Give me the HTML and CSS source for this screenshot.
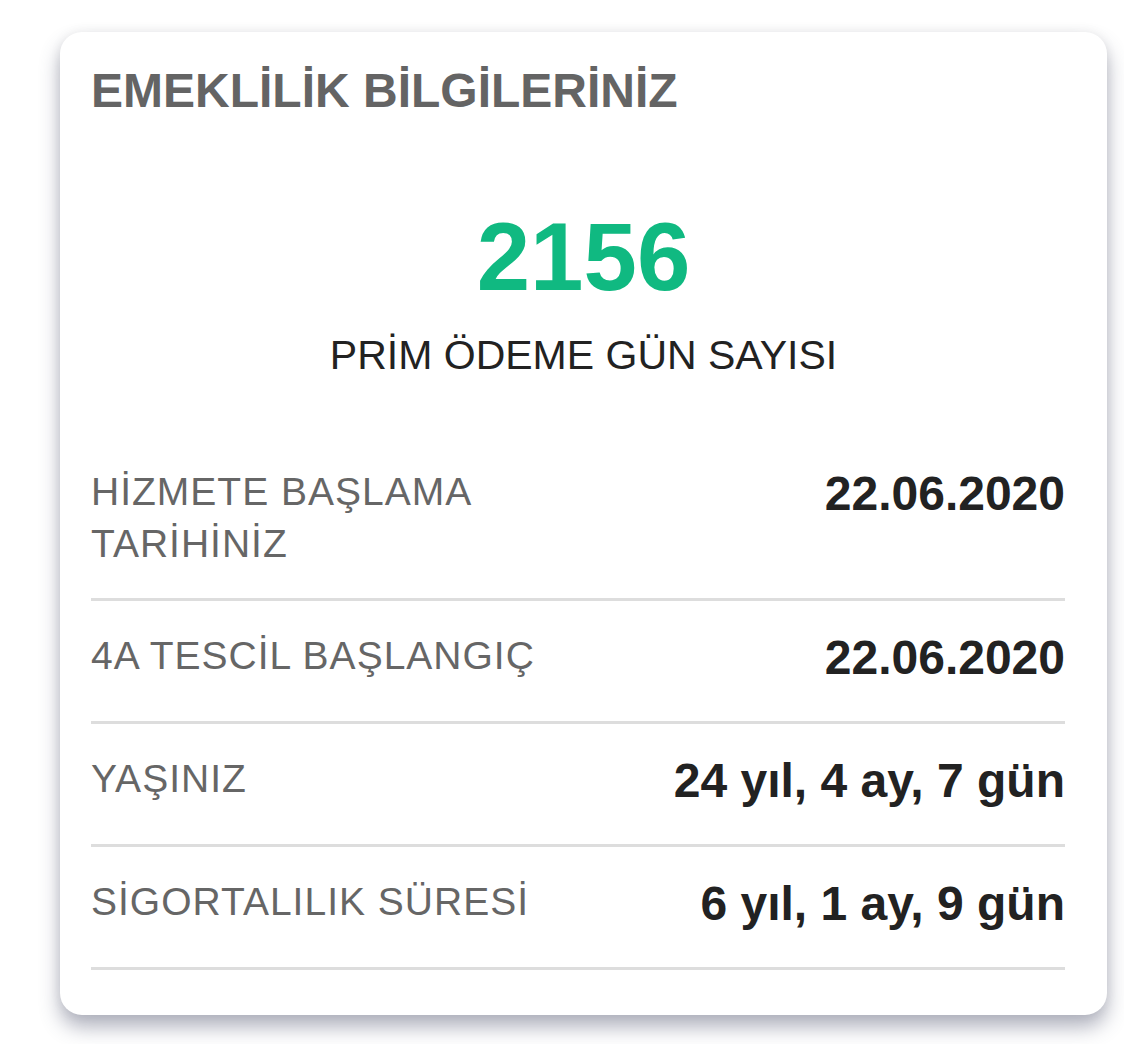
FILE: index.html
```html
<!DOCTYPE html>
<html lang="tr">
<head>
    <meta charset="UTF-8">
    <meta name="viewport" content="width=device-width, initial-scale=1.0">
    <title>Emeklilik Bilgileriniz</title>
    <link rel="stylesheet" href="styles.css">
</head>
<body>
    <div class="card">
        <h1 class="card-title">EMEKLİLİK BİLGİLERİNİZ</h1>

        <div class="summary">
            <div class="summary-number">2156</div>
            <div class="summary-label">PRİM ÖDEME GÜN SAYISI</div>
        </div>

        <div class="info-list">
            <div class="info-row">
                <div class="info-label">HİZMETE BAŞLAMA<br>TARİHİNİZ</div>
                <div class="info-value">22.06.2020</div>
            </div>
            <div class="info-row">
                <div class="info-label">4A TESCİL BAŞLANGIÇ</div>
                <div class="info-value">22.06.2020</div>
            </div>
            <div class="info-row">
                <div class="info-label">YAŞINIZ</div>
                <div class="info-value">24 yıl, 4 ay, 7 gün</div>
            </div>
            <div class="info-row">
                <div class="info-label">SİGORTALILIK SÜRESİ</div>
                <div class="info-value">6 yıl, 1 ay, 9 gün</div>
            </div>
        </div>
    </div>
</body>
</html>
```

FILE: styles.css
```css
body {
    font-family: "Liberation Sans", Arial, sans-serif;
    margin: 0;
    padding: 32px 17px 29px 60px;
    background-color: #ffffff;
}
.card {
    background: #ffffff;
    border-radius: 22px;
    padding: 31px 31px 45px 31px;
    box-shadow: 0 12px 20px rgba(80, 85, 110, 0.45), 0 0 12px rgba(0, 0, 0, 0.06);
}
.card-title {
    margin: 0;
    font-size: 48px;
    line-height: 56px;
    font-weight: bold;
    color: #646464;
}
.summary {
    text-align: center;
    margin-top: 90px;
}
.summary-number {
    font-size: 96px;
    line-height: 96px;
    font-weight: bold;
    color: #10b981;
}
.summary-label {
    margin-top: 26px;
    font-size: 41px;
    line-height: 48px;
    color: #222;
}
.info-list {
    margin-top: 58px;
    margin-right: 11px;
}
.info-row {
    display: flex;
    justify-content: space-between;
    align-items: flex-start;
    padding: 29px 0 35px;
    border-bottom: 3px solid #dddddd;
}
.info-row:first-child {
    padding-bottom: 28px;
}
.info-label {
    font-size: 39px;
    line-height: 52px;
    letter-spacing: 1px;
    color: #666;
}
.info-value {
    font-size: 48px;
    line-height: 56px;
    font-weight: bold;
    color: #222;
    white-space: nowrap;
}
```
